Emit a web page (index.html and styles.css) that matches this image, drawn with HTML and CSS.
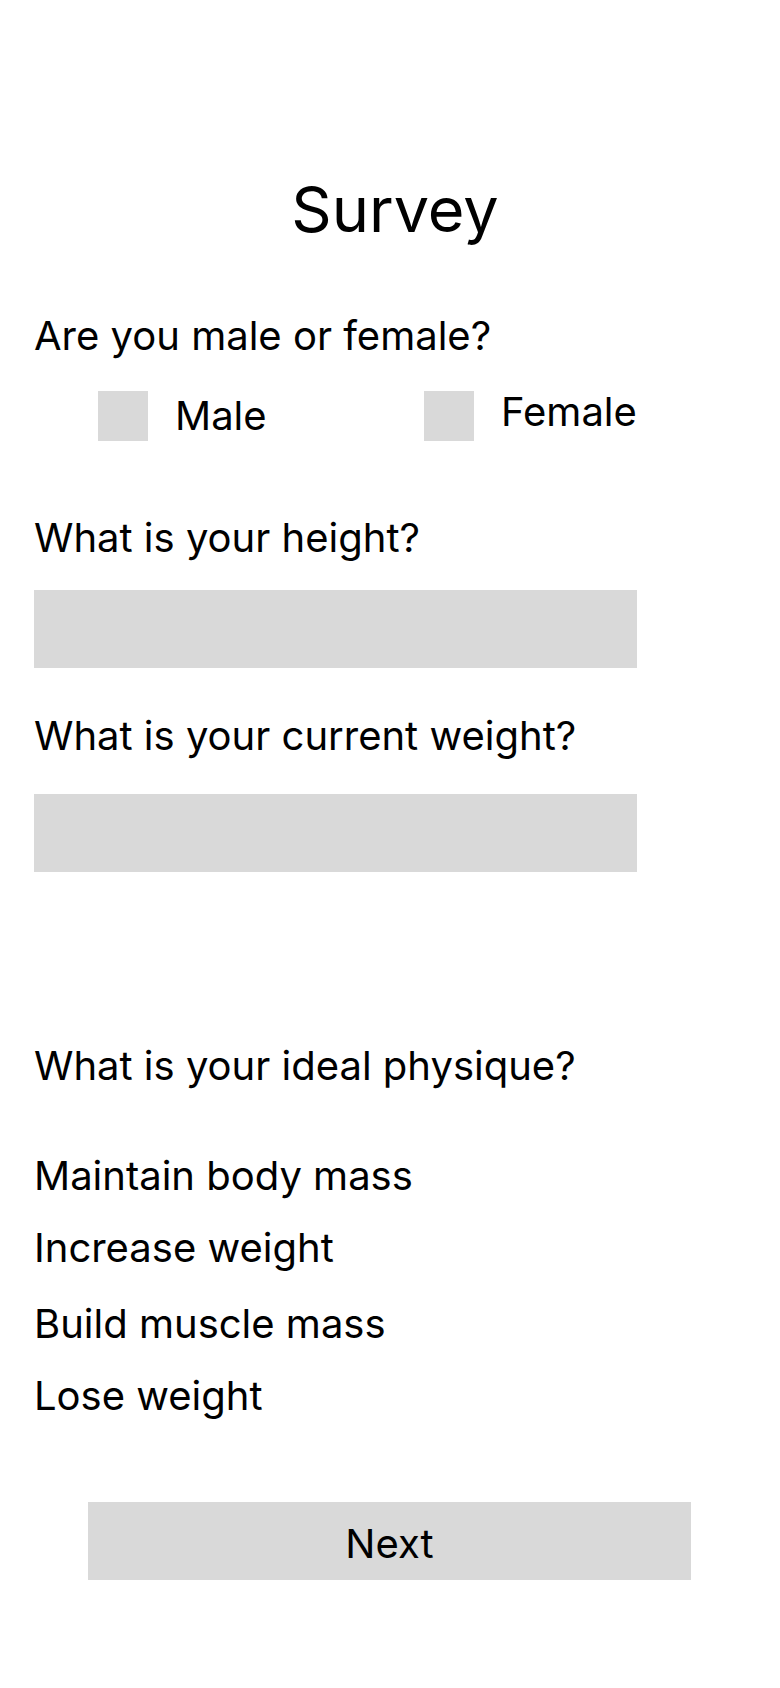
FILE: index.html
```html
<!DOCTYPE html>
<html lang="en">

<head>
    <meta charset="UTF-8">
    <meta name="viewport" content="width=device-width, initial-scale=1.0">
    <title>Survey</title>
    <link rel="stylesheet" href="styles.css">
</head>

<body>
    <div class="survey">
        <h1 class="title">Survey</h1>

        <!-- Gender -->
        <p class="question q-gender">Are you male or female?</p>
        <div class="options">
            <label class="option">
                <input type="checkbox" class="check" name="male">
                <span class="option-label">Male</span>
            </label>
            <label class="option">
                <input type="checkbox" class="check" name="female">
                <span class="option-label option-label-raised">Female</span>
            </label>
        </div>

        <!-- Measurements -->
        <p class="question q-height">What is your height?</p>
        <input type="text" class="field field-height">

        <p class="question q-weight">What is your current weight?</p>
        <input type="text" class="field field-weight">

        <!-- Goal -->
        <p class="question q-physique">What is your ideal physique?</p>
        <div class="choices">
            <div class="choice">Maintain body mass</div>
            <div class="choice">Increase weight</div>
            <div class="choice">Build muscle mass</div>
            <div class="choice">Lose weight</div>
        </div>

        <button class="next-btn">Next</button>
    </div>
</body>

</html>
```

FILE: styles.css
```css
* {
    margin: 0;
    padding: 0;
    box-sizing: border-box;
    font-family: "Inter", "Noto Sans", sans-serif;
}

body {
    background-color: #ffffff;
    color: #000000;
}

.survey {
    display: flex;
    flex-direction: column;
    align-items: flex-start;
    padding: 170px 0 0 34px;
}

.title {
    align-self: stretch;
    text-align: center;
    font-size: 63px;
    font-weight: 400;
    line-height: 78px;
    padding-right: 24px;
}

.question,
.option-label,
.choice {
    font-size: 40px;
    font-weight: 400;
    line-height: 44px;
}

.q-gender {
    margin-top: 66px;
}

.options {
    display: flex;
    margin-top: 32px;
    padding-left: 64px;
}

.option {
    width: 326px;
    display: flex;
    align-items: center;
    gap: 27px;
}

.check {
    appearance: none;
    width: 50px;
    height: 50px;
    background-color: #d9d9d9;
    border: none;
    border-radius: 0;
    margin: 0;
}

.option-label-raised {
    margin-bottom: 8px;
}

.q-height {
    margin-top: 74px;
}

.q-weight {
    margin-top: 46px;
}

.field {
    width: 603px;
    height: 78px;
    background-color: #d9d9d9;
    border: none;
    outline: none;
}

.field-height {
    margin-top: 30px;
}

.field-weight {
    margin-top: 36px;
}

.q-physique {
    margin-top: 172px;
}

.choices {
    display: flex;
    flex-direction: column;
    gap: 28px;
    margin-top: 66px;
}

.choice:nth-child(3) {
    margin-top: 4px;
}

.next-btn {
    margin: 84px 0 0 54px;
    width: 603px;
    height: 78px;
    padding-top: 20px;
    padding-bottom: 14px;
    background-color: #d9d9d9;
    border: none;
    font-size: 40px;
    line-height: 44px;
    color: #000000;
    cursor: pointer;
}
```
